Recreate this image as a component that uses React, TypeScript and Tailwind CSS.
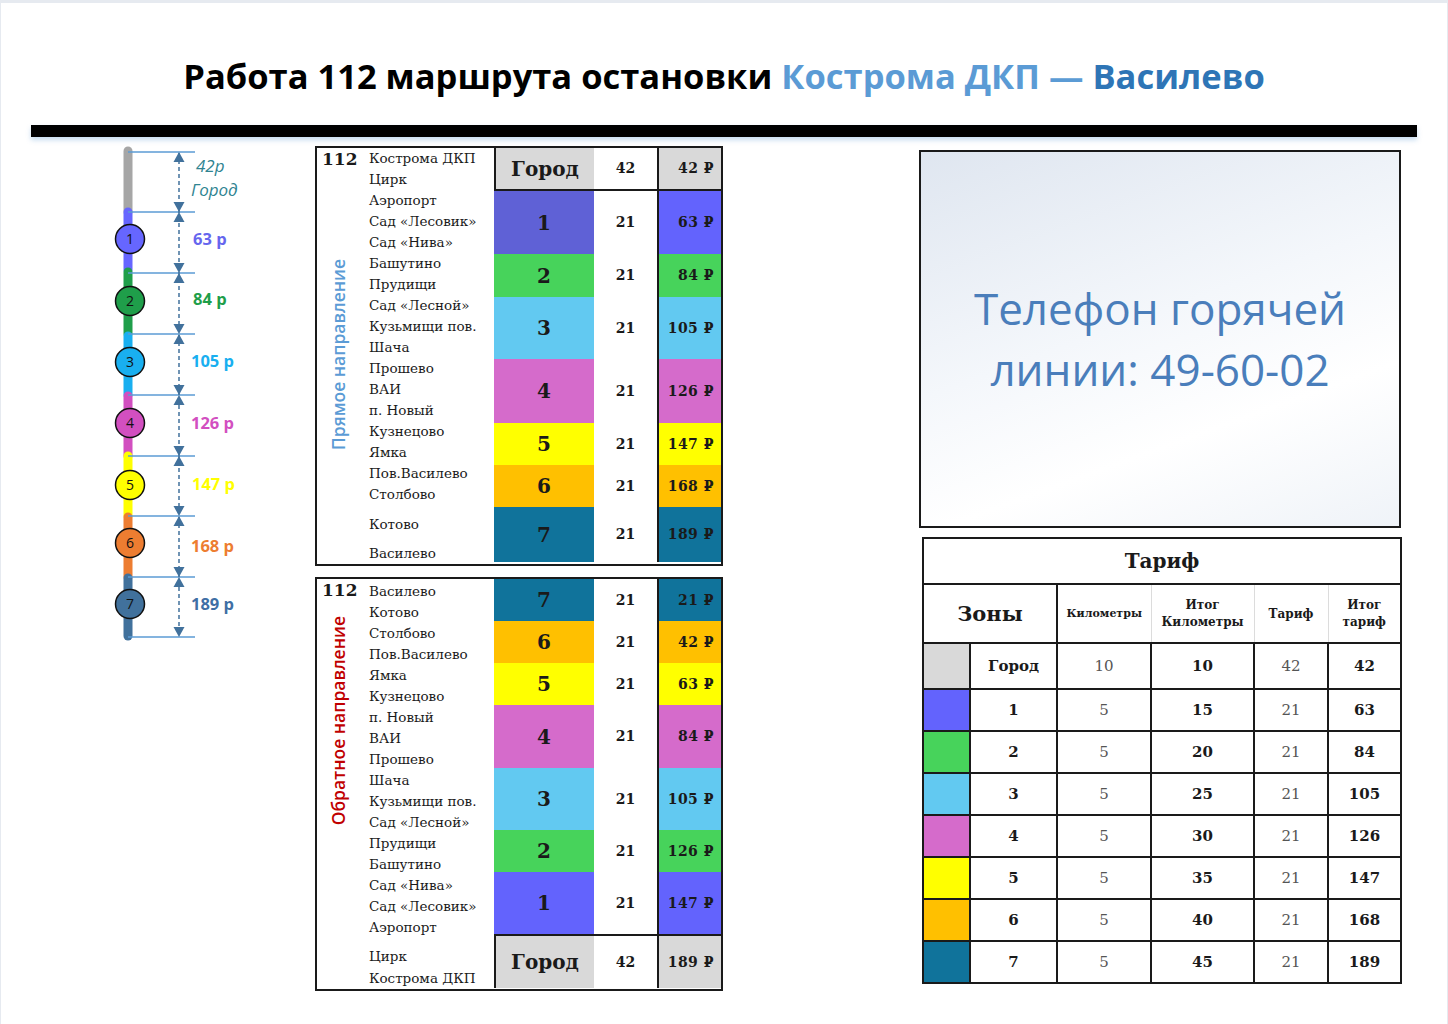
import React from "react";

type ZoneRow = {
	z: string;
	h: string;
	zb: string;
	pb: string;
	km: string;
	p: string;
	city?: boolean;
};

const topRows: ZoneRow[] = [
	{ z: "Город", h: "h-[43px]", zb: "bg-[#d9d9d9]", pb: "bg-[#d9d9d9]", km: "42", p: "42", city: true },
	{ z: "1", h: "h-[63px]", zb: "bg-[#5f61d6]", pb: "bg-[#6363fd]", km: "21", p: "63" },
	{ z: "2", h: "h-[43px]", zb: "bg-[#47d35b]", pb: "bg-[#47d35b]", km: "21", p: "84" },
	{ z: "3", h: "h-[62px]", zb: "bg-[#62c9f1]", pb: "bg-[#62c9f1]", km: "21", p: "105" },
	{ z: "4", h: "h-[64px]", zb: "bg-[#d56bcb]", pb: "bg-[#d56bcb]", km: "21", p: "126" },
	{ z: "5", h: "h-[42px]", zb: "bg-[#ffff00]", pb: "bg-[#ffff00]", km: "21", p: "147" },
	{ z: "6", h: "h-[42px]", zb: "bg-[#ffc000]", pb: "bg-[#ffc000]", km: "21", p: "168" },
	{ z: "7", h: "h-[55px]", zb: "bg-[#10739b]", pb: "bg-[#10739b]", km: "21", p: "189" },
];

const bottomRows: ZoneRow[] = [
	{ z: "7", h: "h-[42px]", zb: "bg-[#10739b]", pb: "bg-[#10739b]", km: "21", p: "21" },
	{ z: "6", h: "h-[42px]", zb: "bg-[#ffc000]", pb: "bg-[#ffc000]", km: "21", p: "42" },
	{ z: "5", h: "h-[42px]", zb: "bg-[#ffff00]", pb: "bg-[#ffff00]", km: "21", p: "63" },
	{ z: "4", h: "h-[63px]", zb: "bg-[#d56bcb]", pb: "bg-[#d56bcb]", km: "21", p: "84" },
	{ z: "3", h: "h-[62px]", zb: "bg-[#62c9f1]", pb: "bg-[#62c9f1]", km: "21", p: "105" },
	{ z: "2", h: "h-[42px]", zb: "bg-[#47d35b]", pb: "bg-[#47d35b]", km: "21", p: "126" },
	{ z: "1", h: "h-[62px]", zb: "bg-[#6363fd]", pb: "bg-[#6363fd]", km: "21", p: "147" },
	{ z: "Город", h: "h-[54px]", zb: "bg-[#d9d9d9]", pb: "bg-[#d9d9d9]", km: "42", p: "189", city: true },
];

const topStops = [
	"Кострома ДКП",
	"Цирк",
	"Аэропорт",
	"Сад «Лесовик»",
	"Сад «Нива»",
	"Башутино",
	"Прудищи",
	"Сад «Лесной»",
	"Кузьмищи пов.",
	"Шача",
	"Прошево",
	"ВАИ",
	"п. Новый",
	"Кузнецово",
	"Ямка",
	"Пов.Василево",
	"Столбово",
];

const bottomStops = [
	"Василево",
	"Котово",
	"Столбово",
	"Пов.Василево",
	"Ямка",
	"Кузнецово",
	"п. Новый",
	"ВАИ",
	"Прошево",
	"Шача",
	"Кузьмищи пов.",
	"Сад «Лесной»",
	"Прудищи",
	"Башутино",
	"Сад «Нива»",
	"Сад «Лесовик»",
	"Аэропорт",
];

const tariff = [
	{ sw: "bg-[#d9d9d9]", z: "Город", km: "10", tk: "10", t: "42", tt: "42", h: "h-[46px]" },
	{ sw: "bg-[#6363fd]", z: "1", km: "5", tk: "15", t: "21", tt: "63", h: "h-[42px]" },
	{ sw: "bg-[#47d35b]", z: "2", km: "5", tk: "20", t: "21", tt: "84", h: "h-[42px]" },
	{ sw: "bg-[#62c9f1]", z: "3", km: "5", tk: "25", t: "21", tt: "105", h: "h-[42px]" },
	{ sw: "bg-[#d56bcb]", z: "4", km: "5", tk: "30", t: "21", tt: "126", h: "h-[42px]" },
	{ sw: "bg-[#ffff00]", z: "5", km: "5", tk: "35", t: "21", tt: "147", h: "h-[42px]" },
	{ sw: "bg-[#ffc000]", z: "6", km: "5", tk: "40", t: "21", tt: "168", h: "h-[42px]" },
	{ sw: "bg-[#10739b]", z: "7", km: "5", tk: "45", t: "21", tt: "189", h: "h-[42px]" },
];

const scaleSegs = [
	{ c: "#a6a6a6", y1: 151, y2: 212 },
	{ c: "#6666ff", y1: 212, y2: 270 },
	{ c: "#1f9e4a", y1: 272, y2: 334 },
	{ c: "#19aff0", y1: 336, y2: 395 },
	{ c: "#d24fc0", y1: 396, y2: 456 },
	{ c: "#ffff00", y1: 456, y2: 516 },
	{ c: "#ed7d31", y1: 517, y2: 577 },
	{ c: "#41719c", y1: 578, y2: 636 },
];

const scaleDots = [
	{ n: "1", y: 239, c: "#6666ff" },
	{ n: "2", y: 301, c: "#1f9e4a" },
	{ n: "3", y: 362, c: "#19aff0" },
	{ n: "4", y: 423, c: "#d24fc0" },
	{ n: "5", y: 485, c: "#ffff00" },
	{ n: "6", y: 543, c: "#ed7d31" },
	{ n: "7", y: 604, c: "#41719c" },
];

const scaleLabels = [
	{ t: "63 р", y: 245, x: 193, c: "#6666ee" },
	{ t: "84 р", y: 305, x: 193, c: "#1f9e4a" },
	{ t: "105 р", y: 367, x: 191, c: "#19aff0" },
	{ t: "126 р", y: 429, x: 191, c: "#d24fc0" },
	{ t: "147 р", y: 490, x: 192, c: "#ffff00" },
	{ t: "168 р", y: 552, x: 191, c: "#ed7d31" },
	{ t: "189 р", y: 610, x: 191, c: "#3f6fa5" },
];

const ticks = [152, 212, 273, 334, 395, 456, 516, 577, 637];

const FareScale = () => (
	<svg
		className="shrink-0 ml-[104px]"
		width={160}
		height={520}
		viewBox="105 137 160 520"
		fontFamily="'Open Sans', sans-serif"
	>
		{scaleSegs.map((s) => (
			<line
				key={s.y1}
				x1={128}
				x2={128}
				y1={s.y1}
				y2={s.y2}
				stroke={s.c}
				strokeWidth={9}
				strokeLinecap="round"
			/>
		))}
		{ticks.map((y) => (
			<line key={y} x1={128} x2={195} y1={y} y2={y} stroke="#5b9bd5" strokeWidth={1.4} />
		))}
		<line x1={179} x2={179} y1={153} y2={636} stroke="#41719c" strokeWidth={1.5} strokeDasharray="4 3" />
		{ticks.map((y, i) => (
			<g key={"a" + y} fill="#41719c">
				{i > 0 && <polygon points={`179,${y} 173.5,${y - 10} 184.5,${y - 10}`} />}
				{i < ticks.length - 1 && <polygon points={`179,${y} 173.5,${y + 10} 184.5,${y + 10}`} />}
			</g>
		))}
		{scaleDots.map((d) => (
			<g key={d.n}>
				<circle cx={130} cy={d.y} r={14.5} fill={d.c} stroke="#111" strokeWidth={1.5} />
				<text x={130} y={d.y + 5} textAnchor="middle" fontSize={14} fill="#111">
					{d.n}
				</text>
			</g>
		))}
		<text x={196} y={172} fontSize={17} fontStyle="italic" fill="#2f8491">
			42р
		</text>
		<text x={191} y={196} fontSize={17} fontStyle="italic" fill="#2f8491">
			Город
		</text>
		{scaleLabels.map((l) => (
			<text key={l.t} x={l.x} y={l.y} fontSize={16.5} fontWeight={700} fill={l.c}>
				{l.t}
			</text>
		))}
	</svg>
);

const RouteTable = ({
	rows,
	stops,
	tail,
	label,
	labelColor,
	labelBox,
	cityTop,
	stopsPad,
}: {
	rows: ZoneRow[];
	stops: string[];
	tail: { name: string; mt: string }[];
	label: string;
	labelColor: string;
	labelBox: string;
	cityTop: boolean;
	stopsPad: string;
}) => (
	<div className="flex border-2 border-[#1a1a1a] bg-white font-['DejaVu_Serif',serif] text-[#1a1a1a]">
		<div className="flex w-[177px] shrink-0">
			<div className="w-[52px] shrink-0 flex flex-col">
				<div className="h-[22px] pl-[5px] pt-[1px] text-[17px] font-bold leading-[20px]">112</div>
				<div className={`flex items-center pl-[11px] ${labelBox}`}>
					<span
						className={`[writing-mode:vertical-rl] rotate-180 font-['Open_Sans',sans-serif] text-[17.5px] font-semibold leading-[20px] ${labelColor}`}
					>
						{label}
					</span>
				</div>
			</div>
			<div className={`flex flex-col text-[13.5px] leading-[21px] whitespace-nowrap ${stopsPad}`}>
				{stops.map((s) => (
					<span key={s}>{s}</span>
				))}
				{tail.map((s) => (
					<span key={s.name} className={s.mt}>
						{s.name}
					</span>
				))}
			</div>
		</div>
		<div className="flex flex-col flex-1">
			{rows.map((r) => (
				<div
					key={r.z}
					className={`flex ${r.h} ${
						r.city ? (cityTop ? "border-b-2 border-[#1a1a1a]" : "border-t-2 border-[#1a1a1a]") : ""
					}`}
				>
					<div
						className={`w-[100px] flex items-center justify-center font-bold text-[20px] ${r.zb} ${
							r.city ? "border-l-2 border-[#1a1a1a]" : ""
						}`}
					>
						{r.z}
					</div>
					<div className="w-[63px] flex items-center justify-center bg-white text-[14px] font-bold">
						{r.km}
					</div>
					<div
						className={`flex-1 flex items-center justify-end pr-[7px] border-l-2 border-[#1a1a1a] text-[14px] font-bold tracking-[0.5px] ${r.pb}`}
					>
						{r.p} ₽
					</div>
				</div>
			))}
		</div>
	</div>
);

const TariffTable = () => (
	<table className="ml-[3px] mt-[9px] w-[478px] table-fixed border-collapse border-2 border-[#1a1a1a] bg-white font-['DejaVu_Serif',serif] text-[#1a1a1a]">
		<colgroup>
			<col className="w-[47px]" />
			<col className="w-[87px]" />
			<col className="w-[94px]" />
			<col className="w-[103px]" />
			<col className="w-[74px]" />
			<col className="w-[73px]" />
		</colgroup>
		<thead>
			<tr className="h-[46px]">
				<th colSpan={6} className="border-b-2 border-[#1a1a1a] text-[20px] font-bold">
					Тариф
				</th>
			</tr>
			<tr className="h-[59px]">
				<th colSpan={2} className="border-r-2 border-b-2 border-[#1a1a1a] text-[21px] font-semibold">
					Зоны
				</th>
				<th className="border-b-2 border-[#1a1a1a] border-r border-r-[#dcdcdc] text-[11px] font-bold leading-[15px]">
					Километры
				</th>
				<th className="border-b-2 border-[#1a1a1a] border-r border-r-[#dcdcdc] text-[12px] font-bold leading-[17px]">
					Итог
					<br />
					Километры
				</th>
				<th className="border-b-2 border-[#1a1a1a] border-r border-r-[#dcdcdc] text-[12px] font-bold">
					Тариф
				</th>
				<th className="border-b-2 border-[#1a1a1a] text-[12px] font-bold leading-[17px]">
					Итог
					<br />
					тариф
				</th>
			</tr>
		</thead>
		<tbody>
			{tariff.map((r) => (
				<tr key={r.z} className={r.h}>
					<td className={`border-2 border-[#1a1a1a] ${r.sw}`} />
					<td className="border-2 border-[#1a1a1a] text-center text-[15px] font-bold">{r.z}</td>
					<td className="border-2 border-[#1a1a1a] text-center text-[15px] text-[#555]">{r.km}</td>
					<td className="border-2 border-[#1a1a1a] text-center text-[15px] font-bold">{r.tk}</td>
					<td className="border-2 border-[#1a1a1a] text-center text-[15px] text-[#555]">{r.t}</td>
					<td className="border-2 border-[#1a1a1a] text-center text-[15px] font-bold">{r.tt}</td>
				</tr>
			))}
		</tbody>
	</table>
);

export default function App() {
	return (
		<div className="w-[1448px] h-[1024px] overflow-hidden bg-white border-t-[3px] border-x border-[#e6eaf0] font-['Open_Sans',sans-serif]">
			<h1 className="h-[122px] pt-[48px] text-center text-[34.5px] font-bold leading-[50px] text-black">
				Работа 112 маршрута остановки <span className="text-[#5b9bd5]">Кострома ДКП — </span>
				<span className="text-[#2e75b6]">Василево</span>
			</h1>
			<div className="mx-[30px] h-[12px] bg-black shadow-[0_3px_5px_rgba(91,155,213,0.35)]" />

			<div className="flex items-start">
				<FareScale />

				<div className="ml-[50px] w-[408px] shrink-0 pt-[9px] flex flex-col gap-[11px]">
					<RouteTable
						rows={topRows}
						stops={topStops}
						tail={[
							{ name: "Котово", mt: "mt-[9px]" },
							{ name: "Василево", mt: "mt-[8px]" },
						]}
						label="Прямое направление"
						labelColor="text-[#5b9bd5]"
						labelBox="h-[370px]"
						cityTop
						stopsPad="pt-0"
					/>
					<RouteTable
						rows={bottomRows}
						stops={bottomStops}
						tail={[
							{ name: "Цирк", mt: "mt-[8px]" },
							{ name: "Кострома ДКП", mt: "mt-[1px]" },
						]}
						label="Обратное направление"
						labelColor="text-[#c00000]"
						labelBox="h-[240px]"
						cityTop={false}
						stopsPad="pt-[2px]"
					/>
				</div>

				<div className="ml-[196px] w-[482px] shrink-0 pt-[13px]">
					<div className="h-[378px] border-2 border-[#1a1a1a] bg-[linear-gradient(160deg,#dfe6f0_0%,#f4f7fb_45%,#ffffff_70%,#eff3f8_100%)] flex items-center justify-center">
						<p className="text-center text-[44px] leading-[61px] text-[#4a7ebb]">
							Телефон горячей
							<br />
							линии: 49-60-02
						</p>
					</div>
					<TariffTable />
				</div>
			</div>
		</div>
	);
}
